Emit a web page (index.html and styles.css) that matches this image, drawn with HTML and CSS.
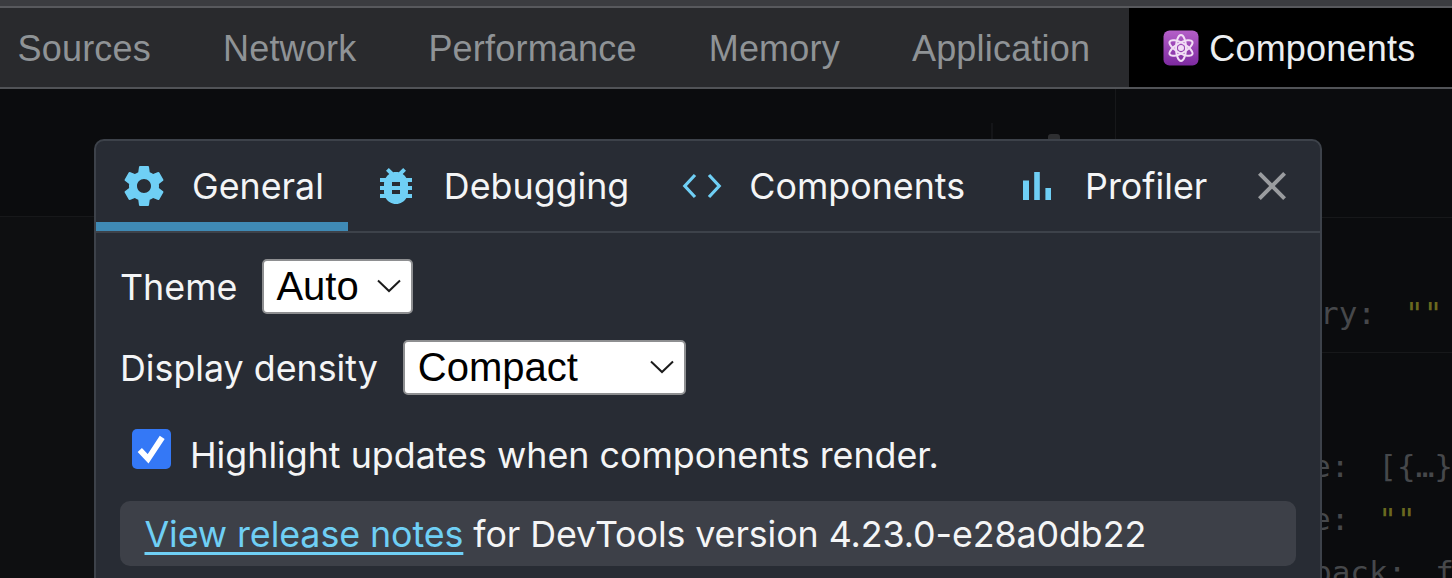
FILE: index.html
```html
<!DOCTYPE html>
<html lang="en">
<head>
    <meta charset="UTF-8">
    <title>Components settings</title>
    <link rel="stylesheet" href="styles.css">
</head>
<body>
    <div class="title-strip"></div>

    <nav class="panel-tabs">
        <a class="panel-tab">Sources</a>
        <a class="panel-tab">Network</a>
        <a class="panel-tab">Performance</a>
        <a class="panel-tab">Memory</a>
        <a class="panel-tab">Application</a>
        <a class="panel-tab panel-tab-active">
            <svg class="atom" viewBox="0 0 36 36">
                <defs>
                    <linearGradient id="atomBg" x1="0" y1="0" x2="0" y2="1">
                        <stop offset="0" stop-color="#b45fc8"/>
                        <stop offset="1" stop-color="#7d2aa0"/>
                    </linearGradient>
                </defs>
                <rect x="0.5" y="0.5" width="35" height="35" rx="6" fill="url(#atomBg)"/>
                <g fill="none" stroke="#f1def5" stroke-width="2">
                    <ellipse cx="18" cy="18" rx="5" ry="13"/>
                    <ellipse cx="18" cy="18" rx="5" ry="13" transform="rotate(60 18 18)"/>
                    <ellipse cx="18" cy="18" rx="5" ry="13" transform="rotate(120 18 18)"/>
                </g>
                <circle cx="18" cy="18" r="3" fill="#f1def5"/>
            </svg>
            Components
        </a>
    </nav>

    <div class="workspace">
        <div class="tree-pane">
            <div class="tree-toolbar">
                <div class="toolbar-sep"></div>
                <div class="toolbar-knob"></div>
            </div>
            <div class="tree-rows"></div>
        </div>
        <div class="props-pane">
            <div class="props-header"></div>
            <div class="props-row props-row-first">ry:<span class="val str">""</span></div>
            <div class="props-gap"></div>
            <div class="props-row props-row-inner">e:<span class="val">[{…}</span></div>
            <div class="props-row props-row-inner">e:<span class="val str">""</span></div>
            <div class="props-row props-row-back">back:<span class="val">f</span></div>
        </div>
    </div>

    <div class="modal">
        <div class="modal-tabs">
            <div class="modal-tab modal-tab-active">
                <svg class="icon" viewBox="0 0 24 24"><path d="M19.43 12.98c.04-.32.07-.64.07-.98s-.03-.66-.07-.98l2.11-1.65c.19-.15.24-.42.12-.64l-2-3.46c-.12-.22-.39-.3-.61-.22l-2.49 1c-.52-.4-1.08-.73-1.69-.98l-.38-2.65C14.46 2.18 14.25 2 14 2h-4c-.25 0-.46.18-.49.42l-.38 2.65c-.61.25-1.17.59-1.69.98l-2.49-1c-.23-.09-.49 0-.61.22l-2 3.46c-.13.22-.07.49.12.64l2.11 1.65c-.04.32-.07.65-.07.98s.03.66.07.98l-2.11 1.65c-.19.15-.24.42-.12.64l2 3.46c.12.22.39.3.61.22l2.49-1c.52.4 1.08.73 1.69.98l.38 2.65c.03.24.24.42.49.42h4c.25 0 .46-.18.49-.42l.38-2.65c.61-.25 1.17-.59 1.69-.98l2.49 1c.23.09.49 0 .61-.22l2-3.46c.12-.22.07-.49-.12-.64l-2.11-1.65zM12 15.5c-1.93 0-3.5-1.57-3.5-3.5s1.57-3.5 3.5-3.5 3.5 1.57 3.5 3.5-1.57 3.5-3.5 3.5z"/></svg>
                General
            </div>
            <div class="modal-tab">
                <svg class="icon" viewBox="0 0 24 24"><path d="M20 8h-2.81c-.45-.78-1.07-1.45-1.82-1.96L17 4.41 15.59 3l-2.17 2.17C12.96 5.06 12.49 5 12 5c-.49 0-.96.06-1.41.17L8.41 3 7 4.41l1.62 1.63C7.88 6.55 7.26 7.22 6.81 8H4v2h2.09c-.05.33-.09.66-.09 1v1H4v2h2v1c0 .34.04.67.09 1H4v2h2.81c1.04 1.79 2.97 3 5.19 3s4.15-1.21 5.19-3H20v-2h-2.09c.05-.33.09-.66.09-1v-1h2v-2h-2v-1c0-.34-.04-.67-.09-1H20V8zm-6 8h-4v-2h4v2zm0-4h-4v-2h4v2z"/></svg>
                Debugging
            </div>
            <div class="modal-tab">
                <svg class="icon" viewBox="0 0 24 24"><path class="code-path" d="M9 6.5 L3.9 12 L9 17.5 M16 6.5 L21.1 12 L16 17.5"/></svg>
                Components
            </div>
            <div class="modal-tab">
                <svg class="icon" viewBox="0 0 24 24"><path d="M5 9.2h3V19H5zM10.6 5h2.8v14h-2.8zm5.6 8H19v6h-2.8z"/></svg>
                Profiler
            </div>
            <button class="close-btn">
                <svg class="icon" viewBox="0 0 24 24"><path d="M19 6.41L17.59 5 12 10.59 6.41 5 5 6.41 10.59 12 5 17.59 6.41 19 12 13.41 17.59 19 19 17.59 13.41 12z"/></svg>
            </button>
        </div>

        <div class="modal-body">
            <div class="setting">
                <span>Theme</span>
                <div class="select select-theme">
                    <span>Auto</span>
                    <svg class="chevron" viewBox="0 0 24 14"><path d="M1 1.5 L12 12 L23 1.5"/></svg>
                </div>
            </div>
            <div class="setting">
                <span>Display density</span>
                <div class="select select-density">
                    <span>Compact</span>
                    <svg class="chevron" viewBox="0 0 24 14"><path d="M1 1.5 L12 12 L23 1.5"/></svg>
                </div>
            </div>
            <label class="check-row">
                <span class="checkbox">
                    <svg viewBox="0 0 40 40"><path d="M8 21 L16.5 30 L31 8"/></svg>
                </span>
                <span>Highlight updates when components render.</span>
            </label>
            <div class="release-box">
                <a class="release-link">View release notes</a> for DevTools version 4.23.0-e28a0db22
            </div>
        </div>
    </div>
</body>
</html>
```

FILE: styles.css
```css
:root {
    --page-bg: #0b0c0e;
    --bar-bg: #292a2d;
    --bar-line: #515357;
    --modal-bg: #282c34;
    --modal-line: #3d424a;
    --accent: #6fcff5;
    --faint-line: #17181a;
}

html, body {
    height: 100%;
}

body {
    margin: 0;
    overflow: hidden;
    position: relative;
    background-color: var(--page-bg);
    font-family: 'Inter', sans-serif;
}

.title-strip {
    height: 6px;
    background-color: #3b3c40;
    border-bottom: 2px solid #58595d;
}

.panel-tabs {
    display: flex;
    height: 79px;
    background-color: var(--bar-bg);
    border-bottom: 2px solid var(--bar-line);
    font-family: 'Liberation Sans', sans-serif;
    font-size: 36px;
    letter-spacing: 0.2px;
    color: #8f9396;
    margin-left: -18.5px;
}

.panel-tab {
    display: flex;
    align-items: center;
    padding: 3px 36px 0;
    white-space: nowrap;
}

.panel-tab-active {
    flex: 1;
    gap: 10px;
    margin-left: 3px;
    padding-left: 34px;
    background-color: #000;
    color: #eceef0;
}

.atom {
    width: 36px;
    height: 36px;
    margin-top: -3px;
}

/* what sits behind the dialog */
.workspace {
    display: flex;
    height: 489px;
}

.tree-pane {
    flex: 1;
    display: flex;
    flex-direction: column;
}

.tree-toolbar {
    display: flex;
    justify-content: flex-end;
    align-items: flex-end;
    height: 127px;
    border-bottom: 1px solid var(--faint-line);
}

.toolbar-sep {
    width: 2px;
    height: 20px;
    margin-bottom: 73px;
    background-color: #141518;
}

.toolbar-knob {
    width: 12px;
    height: 7px;
    margin: 0 55px 75px 55px;
    border-radius: 3px 3px 0 0;
    background-color: #2e2f31;
}

.tree-rows {
    flex: 1;
    background-color: #0e0f11;
}

.props-pane {
    width: 336px;
    border-left: 1px solid var(--faint-line);
    font-family: 'DejaVu Sans Mono', monospace;
    font-size: 31px;
    line-height: 53px;
    color: #46484b;
}

.props-header {
    height: 128px;
    border-bottom: 1px solid var(--faint-line);
}

.props-row {
    height: 53px;
    padding-left: 204px;
    white-space: pre;
}

.props-row-first {
    margin-top: 69px;
}

.props-gap {
    height: 87px;
    margin-top: 12px;
    border-top: 1px solid var(--faint-line);
}

.props-row-inner {
    padding-left: 196px;
}

.props-row-back {
    padding-left: 197px;
}

.val {
    margin-left: 29px;
}

.str {
    color: #6a691f;
}

/* settings dialog */
.modal {
    position: absolute;
    top: 139px;
    left: 94px;
    width: 1224px;
    height: 460px;
    background-color: var(--modal-bg);
    border: 2px solid var(--modal-line);
    border-radius: 10px;
    color: #f4f5f6;
    font-size: 35.8px;
}

.modal-tabs {
    display: flex;
    height: 90px;
    border-bottom: 2px solid var(--modal-line);
}

.modal-tab {
    display: flex;
    align-items: center;
    gap: 24px;
    padding: 0 24px;
    white-space: nowrap;
}

.modal-tab-active {
    box-shadow: inset 0 -9px 0 #3f8ab5;
}

.icon {
    width: 48px;
    height: 48px;
    fill: var(--accent);
    flex-shrink: 0;
}

.code-path {
    fill: none;
    stroke: var(--accent);
    stroke-width: 1.6;
}

.close-btn {
    margin-left: auto;
    margin-right: 24px;
    padding: 0;
    border: none;
    background: none;
    display: flex;
    align-items: center;
}

.close-btn .icon {
    fill: #9a9c9f;
}

.modal-body {
    display: flex;
    flex-direction: column;
    padding: 26px 24px 0;
}

.setting {
    display: flex;
    align-items: center;
    gap: 25px;
    height: 55px;
    margin-bottom: 26px;
}

.select {
    display: flex;
    align-items: center;
    justify-content: space-between;
    box-sizing: border-box;
    height: 55px;
    padding: 0 10px 1px 13px;
    background-color: #fff;
    border: 2px solid #8e8f91;
    border-radius: 5px;
    font-family: 'Liberation Sans', sans-serif;
    font-size: 40px;
    color: #000;
}

.select-theme {
    width: 151px;
    padding-left: 12px;
}

.select-density {
    width: 283px;
}

.chevron {
    width: 24px;
    height: 14px;
    fill: none;
    stroke: #1c1c1c;
    stroke-width: 2;
}

.check-row {
    display: flex;
    align-items: center;
    gap: 19px;
    margin: 12px 0 0 12px;
}

.checkbox {
    width: 39px;
    height: 40px;
    margin-top: -12px;
    border-radius: 5px;
    background-color: #3478f6;
}

.checkbox svg {
    display: block;
    width: 39px;
    height: 40px;
    fill: none;
    stroke: #fff;
    stroke-width: 6;
}

.release-box {
    margin-top: 24px;
    width: 1176px;
    box-sizing: border-box;
    height: 65px;
    line-height: 66px;
    padding-left: 24.5px;
    background-color: #3d4048;
    border-radius: 10px;
    letter-spacing: -0.08px;
}

.release-link {
    color: var(--accent);
    text-decoration: underline;
    text-decoration-thickness: 2.5px;
    text-underline-offset: 5px;
}
```
